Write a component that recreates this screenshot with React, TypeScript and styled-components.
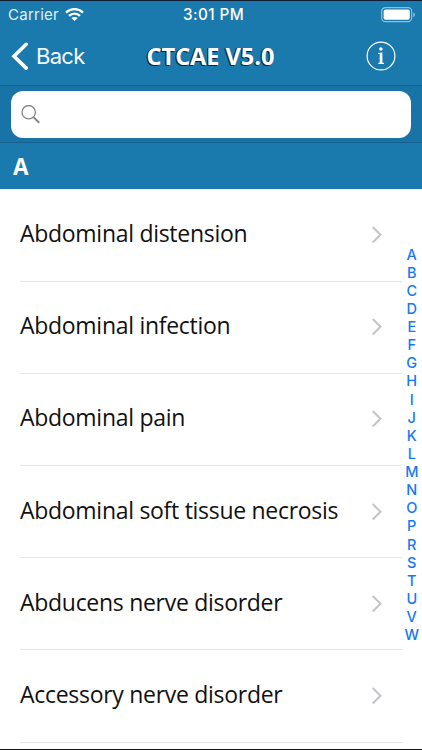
import React from 'react';
import styled, { createGlobalStyle } from 'styled-components';

const GlobalStyle = createGlobalStyle`
  * { box-sizing: border-box; }
  html, body { margin: 0; padding: 0; }
  body { overflow: hidden; background: #fff; }
`;

const Screen = styled.div`
  position: relative;
  display: flex;
  flex-direction: column;
  width: 422px;
  height: 750px;
  overflow: hidden;
  background: #fff;
  border-top: 1px solid #101a30;
  border-bottom: 1px solid #161616;
  font-family: 'Open Sans', 'Noto Sans', sans-serif;
`;

const StatusBar = styled.div`
  display: grid;
  grid-template-columns: 1fr auto 1fr;
  align-items: center;
  flex: none;
  height: 27px;
  padding: 0 6px 0 7px;
  background: #1a79ad;
  color: #fff;
  font: 400 15px/27px Inter, sans-serif;
`;

const Carrier = styled.div`
  display: flex;
  align-items: center;
  gap: 6px;
  padding-left: 1px;
  color: #e3f0f7;
  letter-spacing: 0.25px;
`;

const Clock = styled.div`
  font-weight: 500;
  font-size: 15.3px;
  letter-spacing: 0.4px;
  padding-left: 4px;
`;

const BatterySlot = styled.div`
  display: flex;
  justify-content: flex-end;
`;

const NavBar = styled.div`
  display: grid;
  grid-template-columns: 1fr auto 1fr;
  align-items: center;
  flex: none;
  height: 58px;
  padding: 0 11px 1px;
  background: #1a79ad;
  border-bottom: 1px solid #17618e;
`;

const BackButton = styled.button`
  display: flex;
  align-items: center;
  gap: 7px;
  padding: 0;
  border: 0;
  background: none;
  color: #f2f9fd;
  font: 400 22px/30px Inter, sans-serif;
  letter-spacing: -0.7px;
`;

const Title = styled.h1`
  margin: 0 1px 0 0;
  position: relative;
  color: #fff;
  font: 700 23.5px/30px 'Open Sans', sans-serif;
  text-shadow: -1px 0 0 #10222e, -1px 1px 0 #10222e;
`;

const InfoButton = styled.button`
  display: flex;
  justify-self: end;
  margin-right: 15px;
  padding: 0;
  border: 0;
  background: none;
`;

const SearchBar = styled.div`
  flex: none;
  height: 57px;
  padding: 5px 11px 4px;
  background: #1874a7;
  border-bottom: 1px solid #17618e;
`;

const SearchField = styled.label`
  display: flex;
  align-items: center;
  height: 47px;
  padding-left: 10px;
  border-radius: 12px;
  background: #fff;
`;

const SectionHeader = styled.h2`
  flex: none;
  height: 46px;
  margin: 0;
  padding-left: 13px;
  background: #1a79ad;
  color: #fff;
  font: 700 22.5px/48px 'Open Sans', sans-serif;
`;

const List = styled.ul`
  flex: none;
  margin: 0;
  padding: 0.5px 20px 0;
  list-style: none;
`;

const Row = styled.li`
  display: flex;
  align-items: center;
  justify-content: space-between;
  height: 92.2px;
  padding-right: 19px;
  border-bottom: 1px solid #e6e6e7;
  color: #111;
`;

const Label = styled.span`
  font-size: 23px;
  letter-spacing: -0.29px;
  line-height: 30px;
  white-space: nowrap;
  margin-top: -4px;
`;

const Index = styled.nav`
  position: absolute;
  top: 244.5px;
  right: 0;
  display: flex;
  flex-direction: column;
  width: 20.5px;
  color: #147af3;
  font: 500 14.5px/18.13px Inter, sans-serif;
  text-align: center;
`;

const ITEMS = [
  'Abdominal distension',
  'Abdominal infection',
  'Abdominal pain',
  'Abdominal soft tissue necrosis',
  'Abducens nerve disorder',
  'Accessory nerve disorder',
];

const LETTERS = 'ABCDEFGHIJKLMNOPRSTUVW'.split('');

const WifiIcon = () => (
  <svg width="19" height="14" viewBox="0 0 19 14" fill="none" stroke="#fff" strokeWidth="2.3">
    <path d="M1 4.6C5.8 0 13.2 0 18 4.6" />
    <path d="M4 7.8C7.1 4.8 11.9 4.8 15 7.8" />
    <path d="M9.5 13 6.3 10.1C8 8.5 11 8.5 12.7 10.1Z" fill="#fff" stroke="none" />
  </svg>
);

const BatteryIcon = () => (
  <svg width="35" height="16" viewBox="0 0 35 16" fill="none">
    <rect x="0.7" y="0.7" width="30" height="14" rx="3.6" stroke="#8fbfda" strokeWidth="1.2" />
    <rect x="2.6" y="2.6" width="26.2" height="10.2" rx="1.8" fill="#fff" />
    <path d="M32.3 5.3Q34 6 34 7.7T32.3 10.1Z" fill="#8fbfda" />
  </svg>
);

const BackIcon = () => (
  <svg width="18" height="28" viewBox="0 0 18 28" fill="none" stroke="#fff" strokeWidth="3.6" strokeLinecap="round">
    <path d="M15.2 2.3 3 14.2 15.2 26.1" />
  </svg>
);

const InfoIcon = () => (
  <svg width="30" height="30" viewBox="0 0 30 30" fill="none">
    <circle cx="15" cy="15" r="13.9" stroke="#fff" strokeWidth="1.2" />
    <circle cx="14.9" cy="8" r="1.8" fill="#fff" />
    <path d="M12 12.1 16.4 11.5V21.5L18 22V22.9H12.2V22L13.7 21.5V13.1L12 12.9Z" fill="#fff" />
  </svg>
);

const SearchIcon = () => (
  <svg width="20" height="20" viewBox="0 0 20 20" fill="none" stroke="#858589">
    <circle cx="7.7" cy="7.2" r="6.7" strokeWidth="1.3" />
    <path d="M12.5 12.1 18.2 17.8" strokeWidth="2" />
  </svg>
);

const Chevron = () => (
  <svg width="12" height="18" viewBox="0 0 12 18" fill="none" stroke="#c5c5c9" strokeWidth="2.1">
    <path d="M1.7 1 9.5 8.8 1.7 16.6" />
  </svg>
);

export default function App() {
  return (
    <Screen>
      <GlobalStyle />
      <StatusBar>
        <Carrier>Carrier<WifiIcon /></Carrier>
        <Clock>3:01 PM</Clock>
        <BatterySlot><BatteryIcon /></BatterySlot>
      </StatusBar>
      <NavBar>
        <BackButton><BackIcon />Back</BackButton>
        <Title>CTCAE V5.0</Title>
        <InfoButton aria-label="Info"><InfoIcon /></InfoButton>
      </NavBar>
      <SearchBar>
        <SearchField><SearchIcon /></SearchField>
      </SearchBar>
      <SectionHeader>A</SectionHeader>
      <List>
        {ITEMS.map((item) => (
          <Row key={item}>
            <Label>{item}</Label>
            <Chevron />
          </Row>
        ))}
      </List>
      <Index>
        {LETTERS.map((letter) => <span key={letter}>{letter}</span>)}
      </Index>
    </Screen>
  );
}
